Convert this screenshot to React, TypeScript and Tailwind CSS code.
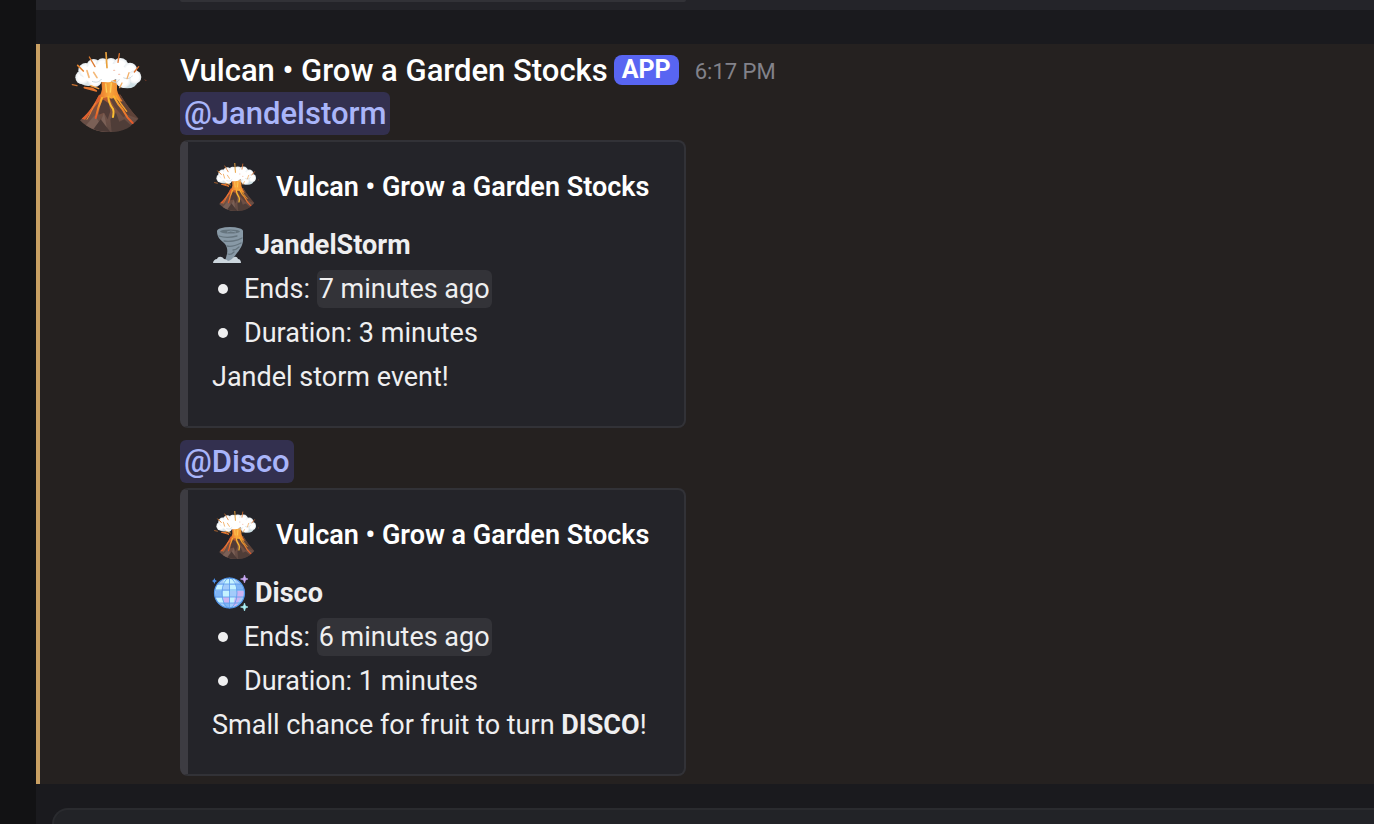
import type { ReactNode } from 'react';

function Volcano({ className }: { className: string }) {
  return (
    <svg viewBox="24 36 240 240" className={className} aria-hidden="true">
      <defs>
        <linearGradient id="rock" x1="0" y1="0" x2="0" y2="1">
          <stop offset="0" stopColor="#d8622c" />
          <stop offset="0.3" stopColor="#85503c" />
          <stop offset="0.6" stopColor="#6d5046" />
          <stop offset="1" stopColor="#5f4a43" />
        </linearGradient>
        <linearGradient id="lava" x1="0" y1="0" x2="1" y2="0">
          <stop offset="0" stopColor="#e4652c" />
          <stop offset="0.5" stopColor="#f9a93c" />
          <stop offset="1" stopColor="#ea7a2a" />
        </linearGradient>
        <linearGradient id="stream" x1="0" y1="0" x2="0" y2="1">
          <stop offset="0" stopColor="#fbb62f" />
          <stop offset="1" stopColor="#e4572a" />
        </linearGradient>
        <radialGradient id="puff">
          <stop offset="0.6" stopColor="#ffffff" />
          <stop offset="1" stopColor="#e6ecef" />
        </radialGradient>
      </defs>
      <path d="M117 164C106 188 88 218 60 241C82 264 110 276 142 276C178 276 211 264 235 236C216 216 196 190 181 164Z" fill="url(#rock)" />
      <path d="M148 175C157 192 165 205 177 216L190 232L202 224L235 236C216 214 196 190 181 164Z" fill="#5f4339" />
      <path d="M128 178L120 200L116 224L132 218L143 238L151 214L146 190Z" fill="#513c37" />
      <path d="M78 256L104 226L120 250L132 218L143 276Q106 276 78 256Z" fill="#7b6056" />
      <path d="M155 275L151 238L168 218L178 245L193 238L214 257C196 270 176 276 155 275Z" fill="#4f3d38" />
      <path d="M100 268L122 238L151 276Q122 276 100 268Z" fill="#4a3935" />
      <path d="M124 120H171L171 150C174 162 180 173 188 184C178 185 172 180 165 173L153 176L145 170L131 174C125 174 120 182 108 192C115 176 124 162 126 148Z" fill="url(#lava)" />
      <path d="M116 167C103 191 87 218 65 236L75 239C90 220 107 195 124 176Z" fill="#df602e" />
      <path d="M126 174C116 197 112 210 107 234" fill="none" stroke="url(#stream)" strokeWidth="6" strokeLinecap="round" />
      <path d="M107 188C96 207 91 224 81 238" fill="none" stroke="#ef8a36" strokeWidth="3" strokeLinecap="round" />
      <path d="M145 171C146 190 151 196 159 207C163 216 160 223 159 231" fill="none" stroke="#fbbd30" strokeWidth="6" strokeLinecap="round" />
      <path d="M161 169L176 194L187 207L202 232L218 249" fill="none" stroke="url(#stream)" strokeWidth="6" strokeLinecap="round" strokeLinejoin="round" />
      <path d="M168 167C179 188 188 200 200 214" fill="none" stroke="#f9a22c" strokeWidth="4" strokeLinecap="round" />
      <path d="M137 130L140 158M154 128L151 158" stroke="#fdd05a" strokeWidth="4" />
      <ellipse cx="202" cy="126" rx="30" ry="19" fill="#cfe0e5" />
      <ellipse cx="85" cy="121" rx="27" ry="17" fill="#dbe5e8" />
      <g fill="url(#puff)">
        <circle cx="67" cy="112" r="21" />
        <circle cx="77" cy="91" r="22" />
        <circle cx="101" cy="78" r="21" />
        <circle cx="128" cy="76" r="21" />
        <circle cx="153" cy="74" r="20" />
        <circle cx="181" cy="78" r="24" />
        <circle cx="210" cy="89" r="21" />
        <circle cx="224" cy="111" r="20" />
        <circle cx="104" cy="120" r="21" />
        <circle cx="190" cy="122" r="22" />
      </g>
      <path d="M65 96C75 78 100 72 130 72C170 68 198 78 212 100L204 120C177 121 168 113 151 126C133 129 119 122 97 128C78 124 71 114 65 96Z" fill="#ffffff" />
      <path d="M96 124C110 129 117 126 125 117M154 122C166 130 174 127 178 118M190 113C204 119 213 114 217 107" fill="none" stroke="#ccd9de" strokeWidth="3" />
      <g strokeLinecap="round" fill="none">
        <path d="M88 51L105 80" stroke="#dd7b31" strokeWidth="4" />
        <path d="M138 38L141 83" stroke="#e9a13c" strokeWidth="5" />
        <path d="M178 41L174 67" stroke="#df7632" strokeWidth="4" />
        <path d="M53 76L70 93" stroke="#e58531" strokeWidth="5" />
        <path d="M236 80L223 96" stroke="#df702c" strokeWidth="4" />
        <path d="M81 92L87 112M101 97L111 113" stroke="#f4b877" strokeWidth="5" />
        <path d="M207 98L201 116M186 129L179 143" stroke="#f3b06a" strokeWidth="4" />
        <path d="M73 143L109 153L96 145Z" stroke="#e77830" strokeWidth="5" strokeLinejoin="round" />
        <path d="M92 137L116 146" stroke="#f5a041" strokeWidth="4" />
        <path d="M37 134L51 137" stroke="#c87231" strokeWidth="4" />
        <path d="M256 120L257 121" stroke="#b44d2c" strokeWidth="3" />
        <path d="M161 91H164M176 103H179" stroke="#f5c7b6" strokeWidth="4" />
      </g>
    </svg>
  );
}

function Tornado() {
  return (
    <svg viewBox="0 0 36 36" className="size-9 shrink-0" aria-hidden="true">
      <path d="M5 4C5 11 9 13 13 17C17 23 15 27 13 34H20C21 29 30 23 31 14V4Z" fill="#8899a6" />
      <ellipse cx="18" cy="4" rx="13" ry="4" fill="#8899a6" />
      <ellipse cx="18" cy="4.500" rx="10" ry="2" fill="#66757f" />
      <path d="M15 5Q18 3 24 5" fill="none" stroke="#8899a6" strokeWidth="1" />
      <path d="M7 9C13 11 21 10 25 9M12 14C17 15 25 14 30 11M15 19C19 20 25 18 29 16M21 23C23 23 26 21 27 20M16 27C18 28 21 26 22 25" fill="none" stroke="#66757f" strokeWidth="1.300" strokeLinecap="round" />
      <path d="M1 36C1 34 3 32 5 32C6 29 10 29 12 32C14 32 15 33 16 34C17 34 18 33 20 32C22 29 25 29 26 32C28 32 29 34 29 36Z" fill="#ccd6dd" />
    </svg>
  );
}

function DiscoBall() {
  return (
    <svg viewBox="0 0 36 36" className="size-9 shrink-0" aria-hidden="true">
      <circle cx="17.500" cy="18" r="15" fill="#a3cbfa" />
      <path d="M12 4H23L24 9H11ZM5 10H11L10 15H3ZM18 10H24L25 16H18ZM11 16H18V22H11ZM4 23H10L12 28H7ZM18 22H25L23 28H18Z" fill="#c5f2ff" />
      <path d="M24 9H29L32 15H25ZM4 16H10V22H3ZM11 28H17V33L13 32Z" fill="#7fb5f5" />
      <path d="M25 16H32L31 22H25ZM11 22H17V28H12ZM23 22H29L24 31H21Z" fill="#ccb4f2" />
      <g fill="none" stroke="#5a9cec" strokeWidth="0.800">
        <ellipse cx="17.500" cy="18" rx="7.500" ry="15" />
        <path d="M17.500 3V33M6 9H29M3 15H32M3 22H32M6 28H29" />
      </g>
      <circle cx="17.500" cy="18" r="15" fill="none" stroke="#5296ea" strokeWidth="1.200" />
      <path d="M32.500 0L33.500 3L36 4L33.500 5L32.500 8L31.500 5L28.500 4L31.500 3Z" fill="#c9a9f5" stroke="#c9a9f5" strokeWidth="0.600" />
      <path d="M32.500 28L33.500 31L36 32L33.500 33L32.500 36L31.500 33L28.500 32L31.500 31Z" fill="#a9f0f5" stroke="#a9f0f5" strokeWidth="0.600" />
      <path d="M2.500 3L3.200 5L5 6L3.200 7L2.500 9L1.500 7L0 6L1.500 5Z" fill="#4c8fe8" />
    </svg>
  );
}

function Mention({ children }: { children: ReactNode }) {
  return (
    <div className="flex h-11 items-start">
      <button type="button" className="h-[43px] rounded-md bg-[#33304f] px-1 text-[31px] leading-[44px] font-medium text-[#a9b5fa]">
        {children}
      </button>
    </div>
  );
}

interface EmbedProps {
  icon: ReactNode;
  title: string;
  ends: string;
  duration: string;
  children: ReactNode;
}

function Embed({ icon, title, ends, duration, children }: EmbedProps) {
  return (
    <article className="mt-1 w-full max-w-[506px] rounded-lg border-2 border-l-8 border-[#323237] border-l-[#3d3c42] bg-[#242429] pt-[21px] pr-2 pb-[27px] pl-6 text-[27px] leading-[44px] whitespace-nowrap text-[#efeff0]">
      <header className="mb-3 flex h-12 items-center gap-4">
        <Volcano className="size-12 shrink-0" />
        <span className="font-semibold text-white">Vulcan • Grow a Garden Stocks</span>
      </header>
      <h3 className="flex items-center gap-[7px] font-bold">
        {icon}
        {title}
      </h3>
      <ul>
        <li className="flex items-center">
          <span className="mr-4 ml-[6px] size-[10px] rounded-full bg-[#efeff0]" />
          Ends:&nbsp;
          <time className="rounded-md bg-[#333338] px-[2px] leading-[38px]">{ends}</time>
        </li>
        <li className="flex items-center">
          <span className="mr-4 ml-[6px] size-[10px] rounded-full bg-[#efeff0]" />
          Duration: {duration}
        </li>
      </ul>
      <p>{children}</p>
    </article>
  );
}

export default function App() {
  return (
    <div className="flex h-screen overflow-hidden bg-[#1a1a1e] font-['Roboto',sans-serif]">
      <aside className="w-9 shrink-0 bg-[#121214]" />
      <main className="min-w-0 flex-1">
        <div className="h-[10px] bg-[#242429] pl-36">
          <div className="h-[2px] w-full max-w-[506px] rounded-b-lg bg-[#323237]" />
        </div>

        <section className="mt-[34px] flex border-l-4 border-[#c9a063] bg-[#252120] pt-1 pb-2 pl-7">
          <Volcano className="mt-1 mr-8 size-20 shrink-0" />
          <div className="min-w-0 flex-1">
            <header className="flex h-11 items-center whitespace-nowrap">
              <h2 className="pt-[2px] text-[31px] leading-[44px] font-medium text-white">Vulcan • Grow a Garden Stocks</h2>
              <span className="ml-[6px] rounded-lg bg-[#5865f2] px-2 text-[25px] leading-[30px] font-bold text-white">APP</span>
              <time className="ml-4 pt-1 text-[22px] leading-[44px] text-[#82828a]">6:17 PM</time>
            </header>

            <Mention>@Jandelstorm</Mention>
            <Embed icon={<Tornado />} title="JandelStorm" ends="7 minutes ago" duration="3 minutes">
              Jandel storm event!
            </Embed>

            <div className="mt-3">
              <Mention>@Disco</Mention>
              <Embed icon={<DiscoBall />} title="Disco" ends="6 minutes ago" duration="1 minutes">
                Small chance for fruit to turn <strong>DISCO</strong>!
              </Embed>
            </div>
          </div>
        </section>

        <form className="mt-6 pl-4">
          <input
            type="text"
            aria-label="Message"
            className="block h-28 w-full rounded-tl-2xl border-2 border-r-0 border-[#2a2b2f] bg-[#222327] px-6 text-[28px] text-white outline-none"
          />
        </form>
      </main>
    </div>
  );
}
